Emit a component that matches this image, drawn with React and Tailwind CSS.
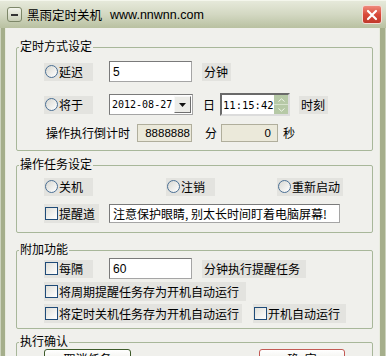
import React from "react";

const BODY = "bg-[#f0f0ec]";

function Radio() {
  return (
    <span className="inline-block shrink-0 w-[13px] h-[13px] rounded-full border border-[#4a6f94] bg-gradient-to-br from-[#d8d8d2] to-white" />
  );
}

function Check() {
  return (
    <span className="inline-block shrink-0 w-[13px] h-[13px] border border-[#1f4b78] bg-gradient-to-br from-[#e0e0da] to-white" />
  );
}

function Opt({ kind, text, w, h = "h-[18px]", ml = "" }) {
  return (
    <div className={`flex items-center ${h} ${w} ${ml} bg-[#e3e3df] pl-[1px]`}>
      {kind === "radio" ? <Radio /> : <Check />}
      <span className="ml-[1px] whitespace-nowrap">{text}</span>
    </div>
  );
}

function Group({ title, h, mt, children }) {
  return (
    <div className={`relative shrink-0 ml-[10px] w-[357px] border border-[#a8b79a] rounded-[2px] ${h} ${mt}`}>
      <span className={`absolute left-[2px] top-[-9px] px-[1px] leading-[14px] whitespace-nowrap ${BODY}`}>{title}</span>
      {children}
    </div>
  );
}

function TextBox({ w, h = "h-[21px]", ml = "", children }) {
  return (
    <div
      className={`flex items-center ${w} ${h} ${ml} bg-white border border-[#a5a5a5] border-t-[#7a7a7a] border-l-[#7a7a7a] pl-[3px] whitespace-nowrap`}
    >
      {children}
    </div>
  );
}

export default function App() {
  return (
    <div className="w-[386px] h-[356px] overflow-hidden flex flex-col font-['Noto_Sans_CJK_SC','Noto_Sans',sans-serif] text-[12px] leading-[14px] text-black bg-[#aab391]">
      {/* title bar */}
      <div className="h-[28px] shrink-0 flex items-center bg-gradient-to-b from-[#e6e9da] via-[#d3d8c2] to-[#b9c1a1] border-t border-[#f4f6ec] pl-[7px] pr-[4px]">
        <div className="w-[15px] h-[15px] rounded-[3px] border border-[#7d8769] bg-gradient-to-b from-[#f3f4ec] to-[#c9cfb6] flex items-center justify-center">
          <span className="block w-[7px] h-[2px] bg-[#333]" />
        </div>
        <span className="ml-[5px] text-[12.5px]">黑雨定时关机</span>
        <span className="ml-[8px] font-['Liberation_Sans',sans-serif] text-[12.5px]">www.nnwnn.com</span>
        <div className="ml-auto mr-[0px] w-[20px] h-[19px] rounded-[3px] border border-[#f3dcd6] bg-gradient-to-b from-[#ee8a7c] via-[#d9493a] to-[#c0392b] flex items-center justify-center">
          <svg width="12" height="12" viewBox="0 0 12 12">
            <path d="M2 2 L10 10 M10 2 L2 10" stroke="white" strokeWidth="2.2" strokeLinecap="round" />
          </svg>
        </div>
      </div>

      {/* body */}
      <div className="flex flex-1 min-h-0">
        <div className="w-[6px] shrink-0 border-l border-[#cdd3be] border-r border-r-[#e8ebdf] bg-[#a5ae8b]" />
        <div className={`flex-1 flex flex-col ${BODY}`}>
          {/* Group 1 */}
          <Group title="定时方式设定" h="h-[104px]" mt="mt-[19px]">
            <div className="flex items-center h-[21px] mt-[13px] pl-[27px]">
              <Opt kind="radio" text="延迟" w="w-[49px]" />
              <TextBox w="w-[83px]" ml="ml-[16px]">
                <span className="font-['Liberation_Sans',sans-serif] text-[12px]">5</span>
              </TextBox>
              <div className="ml-[10px] w-[29px] h-[18px] flex items-center pl-[2px] bg-[#e3e3df]">分钟</div>
            </div>
            <div className="flex items-center h-[23px] mt-[11px] pl-[27px]">
              <Opt kind="radio" text="将于" w="w-[49px]" />
              <div className="ml-[16px] w-[84px] h-[21px] flex items-center bg-white border border-[#a5a5a5] border-t-[#7a7a7a] border-l-[#7a7a7a]">
                <span className="pl-[2px] font-['DejaVu_Sans_Mono',monospace] text-[10px] whitespace-nowrap">2012-08-27</span>
                <div className="ml-auto mr-[1px] w-[17px] h-[17px] flex items-center justify-center bg-[#ecece8] border border-[#f8f8f8] border-r-[#6f6f6f] border-b-[#6f6f6f]">
                  <svg width="7" height="4" viewBox="0 0 7 4">
                    <path d="M0 0 H7 L3.5 4 Z" fill="#111" />
                  </svg>
                </div>
              </div>
              <span className="ml-[10px] w-[12px]">日</span>
              <div className="ml-[5px] w-[70px] h-[23px] flex items-center bg-white border-2 border-[#dcdcdc] border-t-[#6a6a6a] border-l-[#6a6a6a]">
                <span className="pl-[1px] font-['DejaVu_Sans_Mono',monospace] text-[10.5px] whitespace-nowrap">11:15:42</span>
                <div className="ml-auto w-[14px] h-[19px] flex flex-col bg-[#b6c9a6]">
                  <div className="flex-1 flex items-center justify-center border-b border-[#d6e2cc]">
                    <svg width="7" height="4" viewBox="0 0 7 4"><path d="M0.5 3.5 L3.5 0.8 L6.5 3.5" stroke="#eef4e8" fill="none" /></svg>
                  </div>
                  <div className="flex-1 flex items-center justify-center">
                    <svg width="7" height="4" viewBox="0 0 7 4"><path d="M0.5 0.5 L3.5 3.2 L6.5 0.5" stroke="#eef4e8" fill="none" /></svg>
                  </div>
                </div>
              </div>
              <div className="ml-[9px] w-[29px] h-[18px] flex items-center pl-[2px] bg-[#e3e3df]">时刻</div>
            </div>
            <div className="flex items-center h-[18px] mt-[8px] pl-[29px]">
              <span className="w-[84px] whitespace-nowrap">操作执行倒计时</span>
              <div className="ml-[7px] w-[55px] h-[18px] flex items-center justify-end pr-[1px] bg-[#ebe9da] border border-[#b0ae9c] font-['Liberation_Sans',sans-serif] text-[11.5px]">8888888</div>
              <span className="ml-[13px] w-[12px]">分</span>
              <div className="ml-[4px] w-[57px] h-[18px] flex items-center justify-end pr-[6px] bg-[#ebe9da] border border-[#b0ae9c] font-['Liberation_Sans',sans-serif] text-[11.5px]">0</div>
              <span className="ml-[5px]">秒</span>
            </div>
          </Group>

          {/* Group 2 */}
          <Group title="操作任务设定" h="h-[68px]" mt="mt-[14px]">
            <div className="flex items-center h-[19px] mt-[11px] pl-[27px]">
              <Opt kind="radio" text="关机" w="w-[49px]" />
              <Opt kind="radio" text="注销" w="w-[49px]" ml="ml-[73px]" />
              <Opt kind="radio" text="重新启动" w="w-[66px]" ml="ml-[62px]" />
            </div>
            <div className="flex items-center h-[19px] mt-[8px] pl-[27px]">
              <Opt kind="check" text="提醒道" w="w-[55px]" h="h-[19px]" />
              <TextBox w="w-[231px]" h="h-[19px]" ml="ml-[10px]">
                注意保护眼睛, 别太长时间盯着电脑屏幕!
              </TextBox>
            </div>
          </Group>

          {/* Group 3 */}
          <Group title="附加功能" h="h-[79px]" mt="mt-[17px]">
            <div className="flex items-center h-[21px] mt-[7px] pl-[27px]">
              <Opt kind="check" text="每隔" w="w-[49px]" />
              <TextBox w="w-[83px]" ml="ml-[16px]">
                <span className="font-['Liberation_Sans',sans-serif] text-[12px]">60</span>
              </TextBox>
              <div className="ml-[10px] w-[104px] h-[18px] flex items-center pl-[2px] bg-[#e3e3df] whitespace-nowrap">分钟执行提醒任务</div>
            </div>
            <div className="flex items-center h-[19px] mt-[3px] pl-[27px]">
              <Opt kind="check" text="将周期提醒任务存为开机自动运行" w="w-[202px]" h="h-[19px]" />
            </div>
            <div className="flex items-center h-[19px] mt-[3px] pl-[27px]">
              <Opt kind="check" text="将定时关机任务存为开机自动运行" w="w-[198px]" h="h-[19px]" />
              <Opt kind="check" text="开机自动运行" w="w-[93px]" h="h-[19px]" ml="ml-[11px]" />
            </div>
          </Group>

          {/* Group 4 */}
          <Group title="执行确认" h="h-[40px]" mt="mt-[13px]">
            <div className="flex items-start mt-[6px] pl-[27px]">
              <div className="w-[87px] h-[20px] flex items-center justify-center rounded-[3px] border border-[#3d5a2a] bg-gradient-to-b from-white to-[#e4e4dc]">
                取消任务
              </div>
              <div className="ml-[128px] w-[86px] h-[20px] flex items-center justify-center rounded-[3px] border border-[#c35a55] bg-gradient-to-b from-white to-[#e4e4dc]">
                确&nbsp;&nbsp;定
              </div>
            </div>
          </Group>
        </div>
        <div className="w-[7px] shrink-0 border-l border-[#e8ebdf] border-r border-r-[#cdd3be] bg-[#a5ae8b]" />
      </div>
    </div>
  );
}
